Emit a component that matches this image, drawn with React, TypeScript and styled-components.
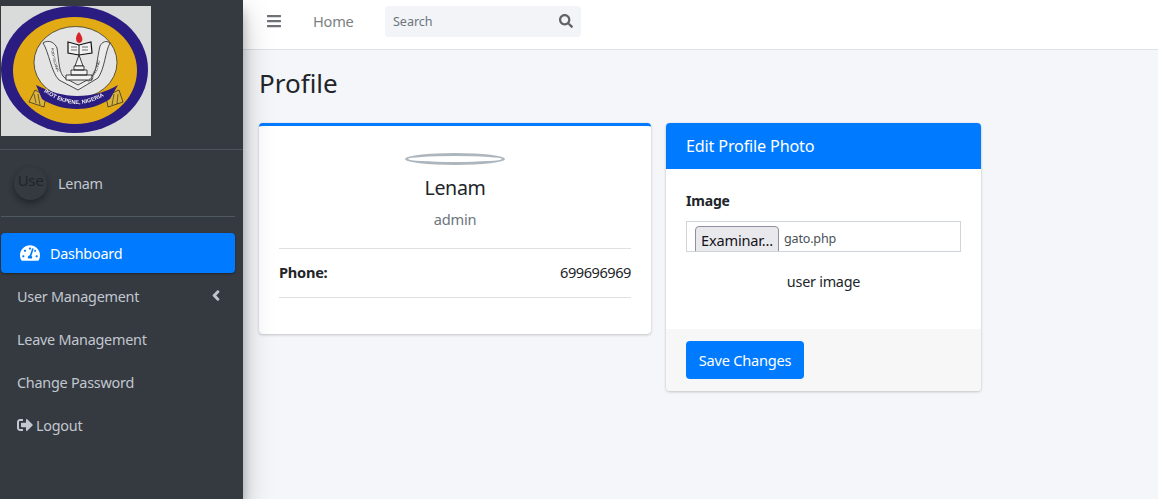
import React from "react";
import styled, { createGlobalStyle } from "styled-components";
import { FaBars, FaSearch, FaTachometerAlt, FaChevronLeft, FaSignOutAlt } from "react-icons/fa";

const Global = createGlobalStyle`
  html, body { margin: 0; padding: 0; height: 100%; overflow: hidden; }
  body { font-family: "Noto Sans", "Liberation Sans", sans-serif; font-size: 15px; color: #212529; background: #f4f6f9; }
  * { box-sizing: border-box; }
`;

const Shell = styled.div`
  display: flex;
  width: 1158px;
  height: 499px;
  overflow: hidden;
`;

const Sidebar = styled.aside`
  width: 243px;
  flex: none;
  background: #343a40;
  box-shadow: 0 14px 28px rgba(0, 0, 0, 0.25), 0 10px 10px rgba(0, 0, 0, 0.22);
  z-index: 2;
  display: flex;
  flex-direction: column;
`;

const Brand = styled.div`
  height: 150px;
  padding: 6px 0 0 1px;
  border-bottom: 1px solid #4b545c;
`;

const UserPanel = styled.div`
  height: 67px;
  margin: 0 8px 0 1px;
  padding-left: 13px;
  display: flex;
  align-items: center;
  gap: 11px;
  border-bottom: 1px solid #4f5962;
`;

const Avatar = styled.div`
  width: 33px;
  height: 33px;
  border-radius: 50%;
  box-shadow: 0 3px 6px rgba(0, 0, 0, 0.16), 0 3px 6px rgba(0, 0, 0, 0.23);
  color: #212529;
  font-size: 15px;
  letter-spacing: -0.3px;
  text-align: center;
  line-height: 27px;
  overflow: hidden;
`;

const UserName = styled.span`
  color: #c2c7d0;
  font-size: 14.4px;
  letter-spacing: -0.25px;
`;

const Nav = styled.nav`
  margin-top: 16px;
  padding: 0 8px 0 1px;
  display: flex;
  flex-direction: column;
  gap: 3px;
`;

const NavItem = styled.a<{ $active?: boolean }>`
  height: 40px;
  display: flex;
  align-items: center;
  padding-left: ${(p) => (p.$active ? "19px" : "16px")};
  border-radius: 4px;
  font-size: 14.4px;
  letter-spacing: -0.25px;
  color: ${(p) => (p.$active ? "#fff" : "#c2c7d0")};
  background: ${(p) => (p.$active ? "#007bff" : "transparent")};
  box-shadow: ${(p) => (p.$active ? "0 1px 3px rgba(0,0,0,.12), 0 1px 2px rgba(0,0,0,.24)" : "none")};
`;

const NavIconBig = styled(FaTachometerAlt)`
  width: 20px;
  height: 20px;
  margin-right: 10px;
`;

const NavIconSmall = styled(FaSignOutAlt)`
  width: 16px;
  height: 16px;
  margin-right: 3px;
`;

const Caret = styled(FaChevronLeft)`
  width: 8px;
  height: 11px;
  margin-left: auto;
  margin-right: 15px;
  margin-top: -2px;
  stroke: currentColor;
  stroke-width: 50px;
`;

const Main = styled.div`
  flex: 1;
  min-width: 0;
  display: flex;
  flex-direction: column;
`;

const Topbar = styled.header`
  height: 50px;
  flex: none;
  background: #fff;
  border-bottom: 1px solid #dee2e6;
  display: flex;
  align-items: center;
  padding: 0 0 7px 24px;
`;

const BarsIcon = styled(FaBars)`
  width: 14px;
  height: 16px;
  color: #6e7276;
`;

const HomeLink = styled.a`
  margin-left: 32px;
  width: 72px;
  color: #7b7f83;
  font-size: 14.6px;
  letter-spacing: -0.25px;
`;

const SearchBox = styled.div`
  width: 196px;
  height: 31px;
  background: #f2f4f7;
  border-radius: 4px;
  display: flex;
  align-items: center;
  justify-content: space-between;
  padding: 0 8px;
  font-size: 12.6px;
  letter-spacing: -0.05px;
  color: #6c757d;
`;

const SearchIcon = styled(FaSearch)`
  width: 14px;
  height: 14px;
  color: #5f6368;
`;

const Content = styled.main`
  padding: 16px 16px 0;
`;

const Title = styled.h1`
  margin: 0 0 20px;
  height: 37px;
  font-size: 26px;
  line-height: 35px;
  font-weight: 400;
  letter-spacing: 0;
  color: #212529;
`;

const Cards = styled.div`
  display: flex;
  align-items: flex-start;
  gap: 15px;
`;

const Card = styled.section<{ $w: number; $accent?: boolean }>`
  width: ${(p) => p.$w}px;
  background: #fff;
  border-radius: 4px;
  overflow: hidden;
  box-shadow: 0 0 1px rgba(0, 0, 0, 0.125), 0 1px 3px rgba(0, 0, 0, 0.2);
  border-top: ${(p) => (p.$accent ? "3px solid #007bff" : "none")};
`;

const ProfileBody = styled.div`
  padding: 27px 20px 36px;
  height: 208px;
  display: flex;
  flex-direction: column;
`;

const Halo = styled.div`
  width: 100px;
  height: 12px;
  align-self: center;
  border: 3px solid #adb5bd;
  border-radius: 50%;
`;

const ProfileName = styled.div`
  margin-top: 8px;
  text-align: center;
  font-size: 19.6px;
  line-height: 30px;
  letter-spacing: -0.35px;
`;

const ProfileRole = styled.div`
  margin-top: 5px;
  text-align: center;
  font-size: 14.6px;
  line-height: 22px;
  letter-spacing: -0.25px;
  color: #6c757d;
`;

const Row = styled.div`
  margin-top: 18px;
  height: 50px;
  padding-bottom: 2px;
  display: flex;
  align-items: center;
  justify-content: space-between;
  border-top: 1px solid #dfe0e1;
  border-bottom: 1px solid #dfe0e1;
  font-size: 14.6px;
  letter-spacing: -0.47px;
`;

const Strong = styled.b`
  font-weight: 700;
  font-size: 14.6px;
  letter-spacing: -0.25px;
`;

const CardHeader = styled.div`
  height: 46px;
  background: #007bff;
  color: #fff;
  padding-left: 20px;
  display: flex;
  align-items: center;
  font-size: 16.2px;
  letter-spacing: -0.18px;
`;

const CardBody = styled.div`
  height: 160px;
  padding: 22px 20px 0;
`;

const FieldLabel = styled.div`
  font-weight: 700;
  font-size: 14px;
  line-height: 20px;
  letter-spacing: -0.2px;
  color: #212529;
`;

const FileField = styled.div`
  margin-top: 10px;
  height: 31px;
  border: 1px solid #ced4da;
  overflow: hidden;
  display: flex;
  align-items: flex-start;
  padding: 4px 0 0 8px;
`;

const FileButton = styled.button`
  width: 84px;
  height: 32px;
  padding: 0 0 5px;
  flex: none;
  background: #e9e9ed;
  border: 1px solid #8f8f9d;
  border-radius: 4px;
  font-family: inherit;
  font-size: 14.6px;
  letter-spacing: -0.2px;
  color: #15141a;
`;

const FileName = styled.span`
  margin-left: 5px;
  line-height: 25px;
  font-size: 12.6px;
  letter-spacing: -0.2px;
  color: #495057;
`;

const Caption = styled.div`
  margin-top: 19px;
  text-align: center;
  font-size: 14.4px;
  line-height: 22px;
  letter-spacing: -0.25px;
  color: #212529;
`;

const CardFooter = styled.div`
  height: 62px;
  background: #f7f7f7;
  padding: 12px 20px 0;
`;

const SaveButton = styled.button`
  width: 118px;
  height: 38px;
  border: 0;
  border-radius: 4px;
  background: #007bff;
  color: #fff;
  font-family: inherit;
  font-size: 14.6px;
  letter-spacing: -0.25px;
`;

const LogoSvg = styled.svg`
  display: block;
  width: 150px;
  height: 130px;
`;

const Logo = () => (
  <LogoSvg viewBox="0 0 150 130">
    <defs>
      <filter id="soft"><feGaussianBlur stdDeviation="0.35" /></filter>
      <path id="ribbonCurve" d="M42 85 Q76 111 110 85" fill="none" />
      <path id="leftScroll" d="M50 42 C52 55 54 68 66 77" fill="none" />
      <path id="rightScroll" d="M88 77 C97 68 99 55 103 42" fill="none" />
    </defs>
    <g filter="url(#soft)">
      <rect width="150" height="130" fill="#d9dada" />
      <ellipse cx="73.5" cy="63.5" rx="73.5" ry="63.5" fill="#2b1b80" />
      <ellipse cx="74" cy="64.5" rx="62" ry="53.5" fill="#e2ab12" />
      <ellipse cx="74.5" cy="56.5" rx="41.5" ry="36" fill="#e4e4e4" stroke="#222" strokeWidth="0.7" />
      <path
        d="M42 37 C48 33 54 37 56 42 C58 56 58 68 64 72 L77 79 L90 72 C96 66 96 52 99 40 C101 36 105 34 109 37 C104 46 104 62 97 72 L77 84 L58 74 C50 66 48 46 42 37 Z"
        fill="#ececec"
        stroke="#222"
        strokeWidth="0.8"
      />
      <path d="M34 84 L28 96 L43 101 L45 90 Z" fill="#d9b33a" stroke="#222" strokeWidth="0.7" />
      <path d="M118 84 L122 96 L107 101 L105 90 Z" fill="#d9b33a" stroke="#222" strokeWidth="0.7" />
      <path d="M33 88 L35 97 M37 88 L39 99 M113 88 L111 99 M117 88 L116 98" stroke="#222" strokeWidth="0.6" />
      <path d="M35 79 C50 86 62 90 76 90 C92 90 105 86 117 79 L109 93 C98 100 88 103 76 103 C62 103 50 99 41 93 Z" fill="#2b1b80" />
      <path d="M78 26 C74 30 74 36 78 37 C83 36 82 31 78 26 Z" fill="#d8232a" />
      <path d="M67 36 L78 39 L90 36 L91 47 L78 49 L67 47 Z" fill="#f2f2f2" stroke="#111" strokeWidth="1.2" />
      <path d="M78 39 V49" stroke="#111" strokeWidth="1" />
      <path d="M70 41 H76 M70 44 H76 M81 41 H87 M81 44 H87" stroke="#999" strokeWidth="1.6" />
      <path d="M78 49 L74 60 H82 Z" fill="#f2f2f2" stroke="#111" strokeWidth="0.8" />
      <path d="M73 60 H83 V64 H73 Z M70 64 H86 V69 H70 Z M65 69 H91 V74 H65 Z" fill="#f2f2f2" stroke="#111" strokeWidth="0.8" />
      <text fontFamily="Liberation Sans, sans-serif" fontSize="5.6" fontWeight="700" fill="#eee">
        <textPath href="#ribbonCurve" startOffset="1">IKOT EKPENE, NIGERIA</textPath>
      </text>
      <text fontFamily="Liberation Sans, sans-serif" fontSize="3.6" fill="#222">
        <textPath href="#leftScroll">POLYTECHNIC</textPath>
      </text>
      <text fontFamily="Liberation Sans, sans-serif" fontSize="3.6" fill="#222">
        <textPath href="#rightScroll">POLYTECHNIC</textPath>
      </text>
    </g>
  </LogoSvg>
);

export default function App() {
  return (
    <>
      <Global />
      <Shell>
        <Sidebar>
          <Brand><Logo /></Brand>
          <UserPanel>
            <Avatar>Use</Avatar>
            <UserName>Lenam</UserName>
          </UserPanel>
          <Nav>
            <NavItem $active><NavIconBig />Dashboard</NavItem>
            <NavItem>User Management<Caret /></NavItem>
            <NavItem>Leave Management</NavItem>
            <NavItem>Change Password</NavItem>
            <NavItem><NavIconSmall />Logout</NavItem>
          </Nav>
        </Sidebar>
        <Main>
          <Topbar>
            <BarsIcon />
            <HomeLink>Home</HomeLink>
            <SearchBox>Search<SearchIcon /></SearchBox>
          </Topbar>
          <Content>
            <Title>Profile</Title>
            <Cards>
              <Card $w={392} $accent>
                <ProfileBody>
                  <Halo />
                  <ProfileName>Lenam</ProfileName>
                  <ProfileRole>admin</ProfileRole>
                  <Row><Strong>Phone:</Strong><span>699696969</span></Row>
                </ProfileBody>
              </Card>
              <Card $w={315}>
                <CardHeader>Edit Profile Photo</CardHeader>
                <CardBody>
                  <FieldLabel>Image</FieldLabel>
                  <FileField>
                    <FileButton>Examinar...</FileButton>
                    <FileName>gato.php</FileName>
                  </FileField>
                  <Caption>user image</Caption>
                </CardBody>
                <CardFooter><SaveButton>Save Changes</SaveButton></CardFooter>
              </Card>
            </Cards>
          </Content>
        </Main>
      </Shell>
    </>
  );
}
